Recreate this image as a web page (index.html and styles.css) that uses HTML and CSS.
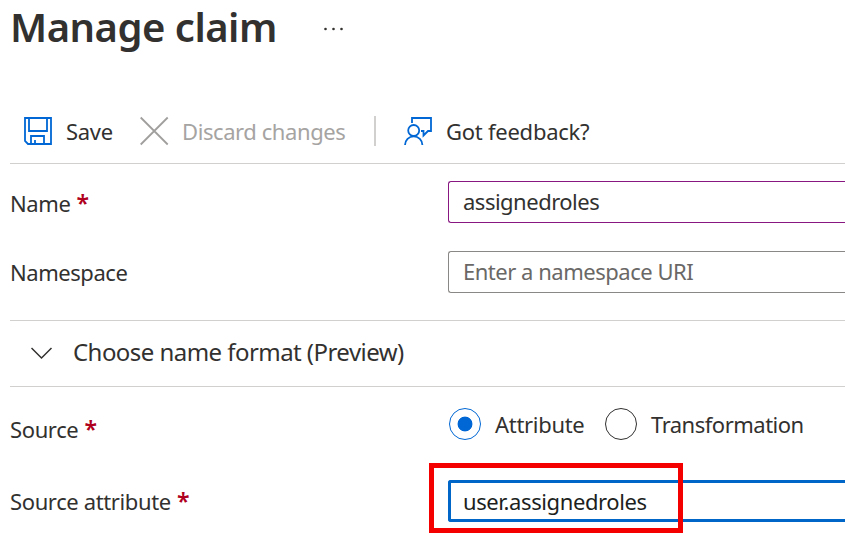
FILE: index.html
```html
<!DOCTYPE html>
<html lang="en"><head><meta charset="utf-8"><title>Manage claim</title><link rel="stylesheet" href="styles.css"></head>
<body>
<header class="title"><h1><span>Manage claim</span></h1><svg class="dots" width="22" height="4" viewBox="0 0 22 4"><circle cx="2.5" cy="2" r="1.3"/><circle cx="10.5" cy="2" r="1.3"/><circle cx="18.5" cy="2" r="1.3"/></svg></header>
<nav class="toolbar">
<svg class="save" width="30" height="30" viewBox="0 0 30 30"><path d="M2 2H28V28H5L2 25ZM6 2V15H24V2M8 28V20H21V28M12 28V24"/></svg><span class="t-save">Save</span>
<svg class="cross" width="30" height="30" viewBox="0 0 30 30"><path d="M.7 1.500L27.700 28.500M27.700 1.500L.7 28.500"/></svg><span class="t-discard">Discard changes</span>
<i class="sep"></i>
<svg class="feedback" width="30" height="30" viewBox="0 0 30 30"><path d="M9 7V2H28V15H25L20.500 19.500V15H18M2 29A8.700 8.700 0 0 1 19.400 29"/><circle cx="10.700" cy="14.500" r="5.500"/></svg><span class="t-feedback">Got feedback?</span>
</nav>
<main>
<div class="row name"><label><span>Name</span><b>*</b></label><div class="input purple"><span>assignedroles</span></div></div>
<div class="row namespace"><label><span>Namespace</span></label><div class="input"><span class="placeholder">Enter a namespace URI</span></div></div>
<section class="format"><svg width="22" height="14" viewBox="0 0 22 14"><path d="M.5 2L10.500 12L20.500 2"/></svg><span>Choose name format (Preview)</span></section>
<div class="row source"><label><span>Source</span><b>*</b></label><div class="choices"><i class="radio checked"></i><span class="attr">Attribute</span><i class="radio"></i><span class="trans">Transformation</span></div></div>
<div class="row attribute"><label><span>Source attribute</span><b>*</b></label><div class="input focused"><span>user.assignedroles</span><i class="highlight"></i></div></div>
</main>
</body></html>
```
FILE: styles.css
```css
*{box-sizing:border-box}
body{margin:0;width:845px;height:539px;overflow:hidden;background:#fff;color:#323130;font:22px/30px "Noto Sans",sans-serif}
span{white-space:nowrap}
svg{flex:none;fill:none}
.title{height:99px;padding-left:10px;display:flex;align-items:flex-start}
h1{font-size:40px;line-height:54px;font-weight:600;margin:0;width:313px;letter-spacing:-.5px}
.dots{fill:#323130;margin-top:27px}
.toolbar{height:65px;margin-left:10px;border-bottom:1px solid #d2d0ce;display:flex;align-items:center;padding-left:13px}
.toolbar svg{stroke:#0067d4;stroke-width:1.8}
.toolbar .cross{stroke:#a19f9d}
.t-save{margin-left:13px;width:74px;letter-spacing:-.3px}
.t-discard{margin-left:12px;width:192px;color:#a6a4a2;letter-spacing:-.42px}
.sep{width:2px;height:30px;background:#d2d0ce;margin-right:27px}
.t-feedback{margin-left:13px;letter-spacing:-.25px}
.row{display:flex;padding-left:10px}
label{width:438px;flex:none;padding-top:7px;letter-spacing:-.37px}
label b{color:#b00020;font-weight:600;font-size:23px;line-height:20px;margin-left:6px}
.name{margin-top:17px;height:70px}
.namespace{height:69px}
.namespace label{padding-top:6px;letter-spacing:-.45px}
.input{flex:1;height:42px;border:1px solid #8a8886;border-right:0;border-radius:3px 0 0 3px;padding:4px 14px;position:relative;letter-spacing:-.5px}
.purple{border-color:#881782}
.placeholder{color:#6a6866;letter-spacing:-.48px}
.format{height:67px;margin-left:10px;border-top:1px solid #d2d0ce;border-bottom:1px solid #d2d0ce;display:flex;align-items:center;padding:0 0 3px 21px;gap:20px;font-size:24px;letter-spacing:-.55px}
.format svg{stroke:#323130;stroke-width:1.5;margin-top:1px}
.source{height:93px;padding-top:20px}
.choices{display:flex;height:34px;align-items:center;padding-left:1px}
.radio{width:32px;height:32px;border:1px solid #323130;border-radius:50%;flex:none}
.checked{border:1px solid #0067d4;background:radial-gradient(circle,#0067d4 0 7px,#fff 7.8px)}
.attr{margin-left:14px;width:110px;letter-spacing:-.3px}
.trans{margin-left:14px;letter-spacing:-.5px}
.attribute label{padding-top:6px}
.focused{border:3px solid #0067c8;border-right:0;padding:3px 12px;letter-spacing:-.39px;color:#201f1e}
.highlight{position:absolute;left:-22px;top:-20px;width:254px;height:70px;border:5px solid #f40000}
```
